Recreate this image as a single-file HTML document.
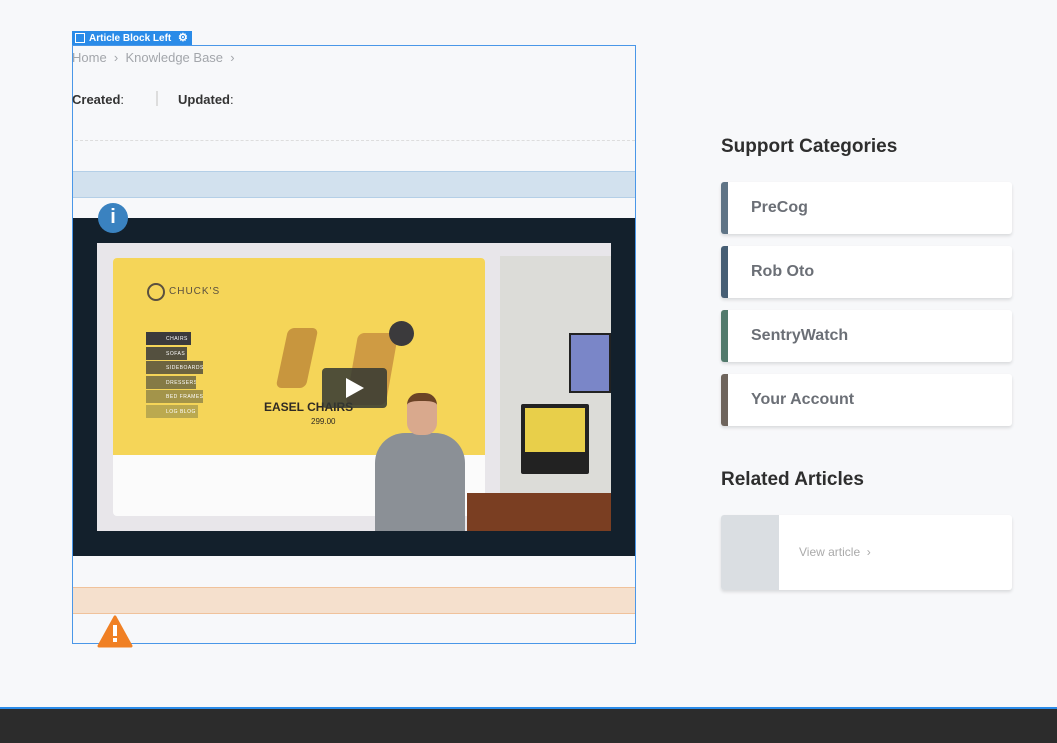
<!DOCTYPE html>
<html><head><style>
*{margin:0;padding:0;box-sizing:border-box}
body{width:1057px;height:743px;background:#f7f8fa;font-family:"Liberation Sans",sans-serif;position:relative;overflow:hidden}
.a{position:absolute}
.cat{position:absolute;left:721px;width:291px;height:52px;background:#fff;border-radius:3px;box-shadow:0 2px 3px rgba(0,0,0,.12);font-size:16px;font-weight:bold;color:#6b6f76;padding:17px 0 0 30px}
.cat i{position:absolute;left:0;top:0;bottom:0;width:7px;border-radius:3px 0 0 3px}
.m{position:absolute;left:49px;height:13px;font-size:5px;color:#fff;padding:4px 0 0 20px;letter-spacing:.5px;white-space:nowrap;overflow:hidden}
</style></head><body>
<div class="a" style="left:72px;top:31px;width:120px;height:14px;background:#2a8be8;color:#fff;font-size:10px;font-weight:bold;padding:2px 0 0 17px">Article Block Left<span style="position:absolute;left:3px;top:2px;width:10px;height:10px;border:1.5px solid #fff"></span><span style="position:absolute;left:106px;top:0px;font-size:11px">⚙</span></div>
<div class="a" style="left:72px;top:45px;width:564px;height:599px;border:1px solid #4a97e8"></div>
<div class="a" style="left:72px;top:50px;font-size:13px;color:#a3a6ab">Home &nbsp;›&nbsp; Knowledge Base &nbsp;›</div>
<div class="a" style="left:72px;top:92px;font-size:13px;font-weight:bold;color:#333">Created<span style="font-weight:normal">:</span></div>
<div class="a" style="left:156px;top:91px;width:2px;height:15px;background:#ddd"></div>
<div class="a" style="left:178px;top:92px;font-size:13px;font-weight:bold;color:#333">Updated<span style="font-weight:normal">:</span></div>
<div class="a" style="left:75px;top:140px;width:560px;border-top:1px dashed #ddd"></div>
<div class="a" style="left:73px;top:171px;width:562px;height:27px;background:#d2e1ee;border-top:1px solid #b4cfe7;border-bottom:1px solid #b4cfe7"></div>
<div class="a" style="left:98px;top:203px;width:30px;height:30px;border-radius:50%;background:#3a82c0;color:#fff;font-weight:bold;font-size:20px;text-align:center;line-height:28px;z-index:2">i</div>
<div class="a" style="left:73px;top:218px;width:562px;height:338px;background:#13202c"></div>
<div class="a" style="left:97px;top:243px;width:514px;height:288px;background:#e8e6ea;overflow:hidden">
 <div class="a" style="left:16px;top:15px;width:372px;height:258px;background:#fbfbfb;border-radius:4px"></div>
 <div class="a" style="left:16px;top:15px;width:372px;height:197px;background:#f5d558;border-radius:4px 4px 0 0"></div>
 <div class="a" style="left:50px;top:40px;width:18px;height:18px;border-radius:50%;border:2px solid #5a5040"></div>
 <div class="a" style="left:72px;top:43px;font-size:10px;color:#5a5040;letter-spacing:1px">CHUCK'S</div>
 <div class="m" style="top:89px;width:45px;background:#3b3a3c">CHAIRS</div>
 <div class="m" style="top:104px;width:41px;background:#54503f">SOFAS</div>
 <div class="m" style="top:118px;width:57px;background:#6d6440">SIDEBOARDS</div>
 <div class="m" style="top:133px;width:50px;background:#857a45">DRESSERS</div>
 <div class="m" style="top:147px;width:57px;background:#a3944a">BED FRAMES</div>
 <div class="m" style="top:162px;width:52px;background:#bba94f">LOG BLOG</div>
 <div class="a" style="left:185px;top:85px;width:30px;height:60px;background:#c8963e;border-radius:6px;transform:skew(-12deg)"></div>
 <div class="a" style="left:255px;top:90px;width:40px;height:72px;background:#cf9b43;border-radius:6px;transform:skew(-10deg)"></div>
 <div class="a" style="left:292px;top:78px;width:25px;height:25px;border-radius:50%;background:#3b3a3c"></div>
 <div class="a" style="left:167px;top:157px;font-size:12px;font-weight:bold;color:#2f2a24">EASEL CHAIRS</div>
 <div class="a" style="left:214px;top:174px;font-size:8px;color:#2f2a24">299.00</div>
 <div class="a" style="left:403px;top:13px;width:111px;height:275px;background:#dcdcd8"></div>
 <div class="a" style="left:472px;top:90px;width:42px;height:60px;background:#222;border:2px solid #222"><div style="background:#7a86c8;height:100%"></div></div>
 <div class="a" style="left:424px;top:161px;width:68px;height:70px;background:#222;border-radius:2px;padding:4px"><div style="background:#e8cf4a;height:44px"></div></div>
 <div class="a" style="left:370px;top:250px;width:144px;height:40px;background:#7a3e22"></div>
 <div class="a" style="left:278px;top:190px;width:90px;height:98px;background:#8b9096;border-radius:30px 30px 0 0"></div>
 <div class="a" style="left:310px;top:150px;width:30px;height:42px;background:#d9a98d;border-radius:12px;border-top:8px solid #6b4326"></div>
 <div class="a" style="left:225px;top:125px;width:65px;height:40px;background:rgba(50,55,50,.85);border-radius:4px"></div>
 <div class="a" style="left:249px;top:135px;width:0;height:0;border-left:18px solid #fff;border-top:10px solid transparent;border-bottom:10px solid transparent"></div>
</div>
<div class="a" style="left:73px;top:587px;width:562px;height:27px;background:#f5e0cd;border-top:1px solid #f0c29b;border-bottom:1px solid #f0c29b"></div>
<svg class="a" style="left:97px;top:615px" width="36" height="34"><path d="M18 2 L34 31 H2 Z" fill="#f08024" stroke="#f08024" stroke-width="3" stroke-linejoin="round"/><rect x="16" y="10" width="4" height="11" fill="#fff"/><rect x="16" y="23" width="4" height="4" fill="#fff"/></svg>
<div class="a" style="left:721px;top:136px;font-size:19px;font-weight:bold;color:#2e2e2e">Support Categories</div>
<div class="cat" style="top:182px"><i style="background:#5f7486"></i>PreCog</div>
<div class="cat" style="top:246px"><i style="background:#465e74"></i>Rob Oto</div>
<div class="cat" style="top:310px"><i style="background:#527a6c"></i>SentryWatch</div>
<div class="cat" style="top:374px"><i style="background:#6e645c"></i>Your Account</div>
<div class="a" style="left:721px;top:469px;font-size:19px;font-weight:bold;color:#2e2e2e">Related Articles</div>
<div class="a" style="left:721px;top:515px;width:291px;height:75px;background:#fff;border-radius:3px;box-shadow:0 2px 3px rgba(0,0,0,.12);overflow:hidden"><div style="width:58px;height:75px;background:#dadee2"></div><div class="a" style="left:78px;top:30px;font-size:12px;color:#aaa">View article &nbsp;›</div></div>
<div class="a" style="left:0;top:707px;width:1057px;height:36px;background:#2c2c2c;border-top:2px solid #2a8be8"></div>
</body></html>
